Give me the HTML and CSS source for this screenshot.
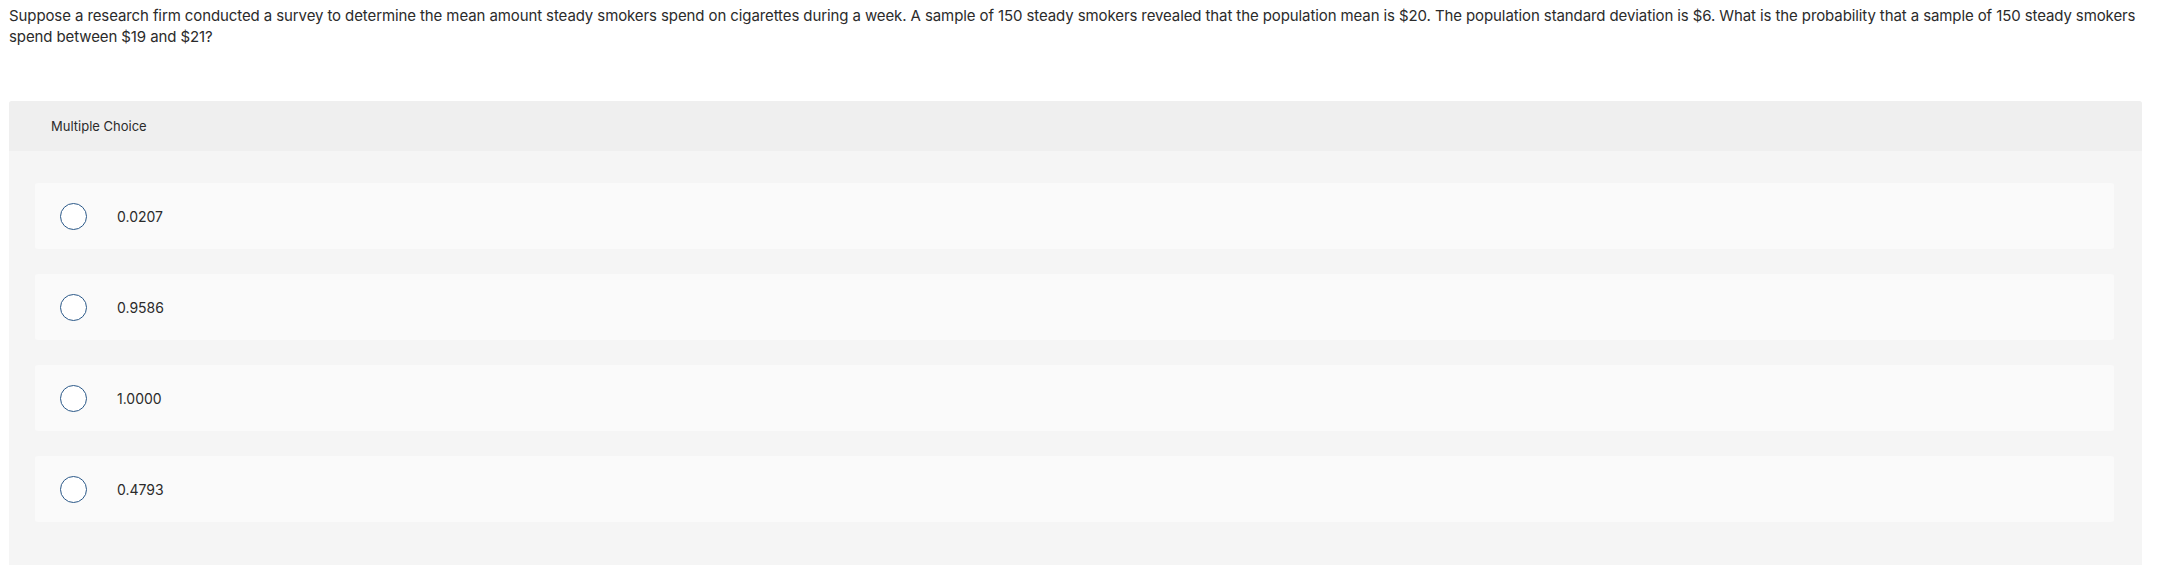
FILE: index.html
```html
<!DOCTYPE html>
<html lang="en">
<head>
<meta charset="utf-8">
<title>Multiple Choice</title>
<link rel="stylesheet" href="styles.css">
</head>
<body>
<div class="page">
  <p class="question">Suppose a research firm conducted a survey to determine the mean amount steady smokers spend on cigarettes during a week. A sample of 150 steady smokers revealed that the population mean is $20. The population standard deviation is $6. What is the probability that a sample of 150 steady smokers spend between $19 and $21?</p>
  <section class="panel">
    <div class="panel-header">Multiple Choice</div>
    <div class="panel-body">
      <label class="option"><span class="radio"></span><span class="option-text">0.0207</span></label>
      <label class="option"><span class="radio"></span><span class="option-text">0.9586</span></label>
      <label class="option"><span class="radio"></span><span class="option-text">1.0000</span></label>
      <label class="option"><span class="radio"></span><span class="option-text">0.4793</span></label>
    </div>
  </section>
</div>
</body>
</html>
```
FILE: styles.css
```css
html, body {
  margin: 0;
  padding: 0;
  background: #ffffff;
}
body {
  font-family: Inter, "Liberation Sans", Arial, sans-serif;
  color: #2b2b2b;
}
.page {
  padding: 5px 30px 0 9px;
}
.question {
  margin: 0;
  font-size: 15px;
  line-height: 21px;
  letter-spacing: -0.1px;
  color: #2b2b2b;
}
.panel {
  margin-top: 54px;
  background: #f5f5f5;
  border-radius: 3px 3px 0 0;
  padding-bottom: 60px;
}
.panel-header {
  height: 50px;
  display: flex;
  align-items: center;
  padding-left: 42px;
  background: #efefef;
  border-radius: 3px 3px 0 0;
  font-size: 13px;
  color: #2b2b2b;
}
.panel-body {
  padding: 32px 28px 0 26px;
  display: flex;
  flex-direction: column;
  gap: 25px;
}
.option {
  height: 66px;
  display: flex;
  align-items: center;
  padding-left: 25px;
  background: #fafafa;
  border-radius: 3px;
}
.radio {
  width: 25px;
  height: 25px;
  border: 1.5px solid #2a5888;
  border-radius: 50%;
  background: #ffffff;
  flex: none;
}
.option-text {
  margin-left: 30px;
  font-size: 14px;
  color: #2b2b2b;
}
```
